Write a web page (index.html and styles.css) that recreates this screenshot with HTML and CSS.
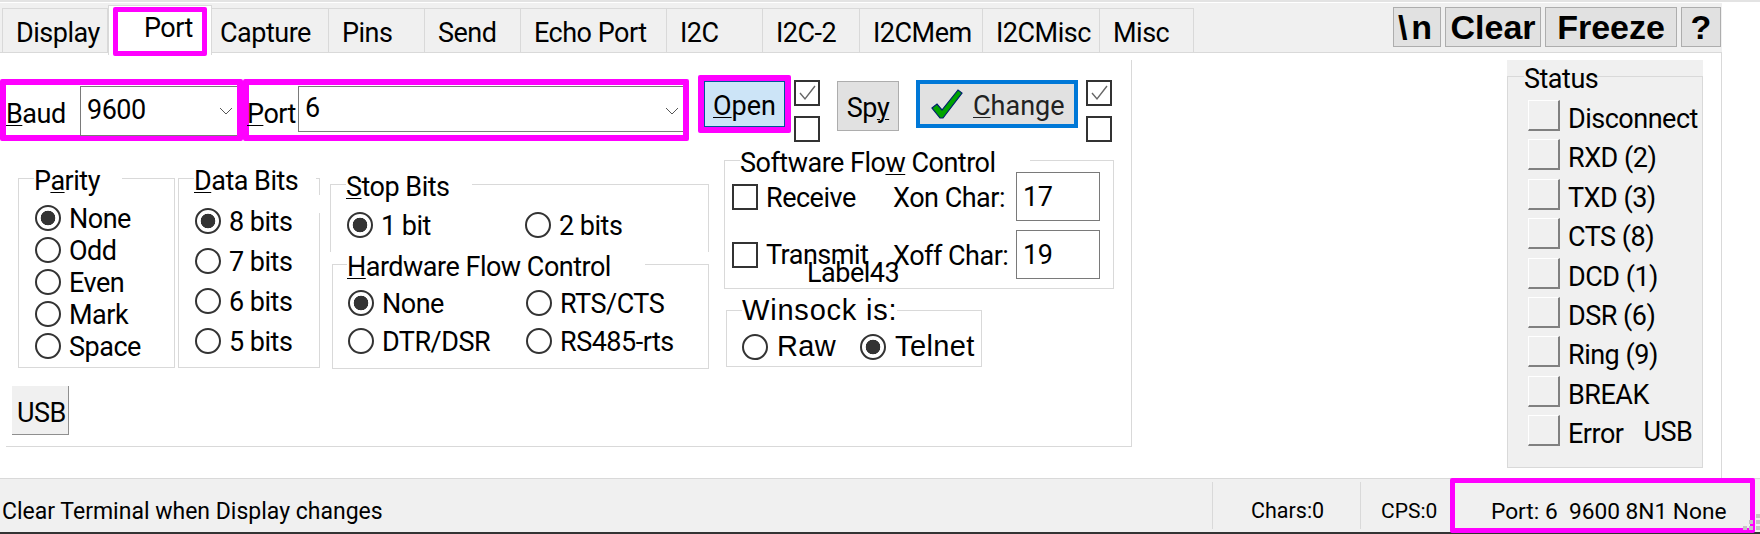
FILE: index.html
```html
<!DOCTYPE html>
<html lang="en">
<head>
    <meta charset="UTF-8">
    <title>Port settings</title>
    <link rel="stylesheet" href="styles.css">
</head>
<body>
    <div class="top-strip"></div>

    <div class="tabbar">
        <div class="tabs">
            <div class="tab">Display</div>
            <div class="tab active"><span class="mark">Port</span></div>
            <div class="tab tab-capture">Capture</div>
            <div class="tab">Pins</div>
            <div class="tab">Send</div>
            <div class="tab">Echo Port</div>
            <div class="tab">I2C</div>
            <div class="tab">I2C-2</div>
            <div class="tab">I2CMem</div>
            <div class="tab">I2CMisc</div>
            <div class="tab">Misc</div>
        </div>
        <div class="tools">
            <button class="tool tool-n">\n</button>
            <button class="tool tool-clear">Clear</button>
            <button class="tool tool-freeze">Freeze</button>
            <button class="tool tool-help">?</button>
        </div>
    </div>

    <div class="main">
        <div class="page">
            <div class="top-row">
                <div class="pick pick-baud">
                    <label class="pick-label"><u>B</u>aud</label>
                    <div class="combo combo-baud">
                        <span>9600</span>
                        <svg class="chevron" width="14" height="8" viewBox="0 0 14 8"><path d="M1 1l6 6 6-6" fill="none" stroke="#555" stroke-width="1"/></svg>
                    </div>
                </div>
                <div class="pick pick-port">
                    <label class="pick-label"><u>P</u>ort</label>
                    <div class="combo combo-port">
                        <span>6</span>
                        <svg class="chevron" width="14" height="8" viewBox="0 0 14 8"><path d="M1 1l6 6 6-6" fill="none" stroke="#555" stroke-width="1"/></svg>
                    </div>
                </div>
                <div class="open-mark"><button class="btn-open"><u>O</u>pen</button></div>
                <div class="checks">
                    <span class="check"><svg width="22" height="22" viewBox="0 0 22 22"><path d="M4 11l5 6L19 4" fill="none" stroke="#666" stroke-width="1.4"/></svg></span>
                    <span class="check"></span>
                </div>
                <button class="btn-spy">Sp<u>y</u></button>
                <button class="btn-change">
                    <svg width="34" height="32" viewBox="0 0 34 32"><path d="M2 20l5-4 5 6L28 2l4 3-19 25h-3z" fill="#00a400" stroke="#00206e" stroke-width="1.2"/></svg>
                    <span><u>C</u>hange</span>
                </button>
                <div class="checks checks-right">
                    <span class="check"><svg width="22" height="22" viewBox="0 0 22 22"><path d="M4 11l5 6L19 4" fill="none" stroke="#666" stroke-width="1.4"/></svg></span>
                    <span class="check"></span>
                </div>
            </div>

            <div class="groups">
                <fieldset class="group group-parity">
                    <legend>P<u>a</u>rity</legend>
                    <label class="opt"><input type="radio" name="parity" checked>None</label>
                    <label class="opt"><input type="radio" name="parity">Odd</label>
                    <label class="opt"><input type="radio" name="parity">Even</label>
                    <label class="opt"><input type="radio" name="parity">Mark</label>
                    <label class="opt"><input type="radio" name="parity">Space</label>
                </fieldset>

                <fieldset class="group group-data">
                    <legend><u>D</u>ata Bits</legend>
                    <label class="opt"><input type="radio" name="data" checked>8 bits</label>
                    <label class="opt"><input type="radio" name="data">7 bits</label>
                    <label class="opt"><input type="radio" name="data">6 bits</label>
                    <label class="opt"><input type="radio" name="data">5 bits</label>
                </fieldset>

                <div class="col-mid">
                    <fieldset class="group group-stop">
                        <legend><u>S</u>top Bits</legend>
                        <div class="opt-grid">
                            <label class="opt"><input type="radio" name="stop" checked>1 bit</label>
                            <label class="opt"><input type="radio" name="stop">2 bits</label>
                        </div>
                    </fieldset>
                    <fieldset class="group group-hw">
                        <legend><u>H</u>ardware Flow Control</legend>
                        <div class="opt-grid">
                            <label class="opt"><input type="radio" name="hw" checked>None</label>
                            <label class="opt"><input type="radio" name="hw">RTS/CTS</label>
                            <label class="opt"><input type="radio" name="hw">DTR/DSR</label>
                            <label class="opt"><input type="radio" name="hw">RS485-rts</label>
                        </div>
                    </fieldset>
                </div>

                <div class="col-right">
                    <fieldset class="group group-soft">
                        <legend>Software Flo<u>w</u> Control</legend>
                        <div class="soft-row">
                            <span class="check"></span>
                            <span class="soft-name">Receive</span>
                            <span class="soft-char">Xon Char:</span>
                            <input class="soft-input" type="text" value="17">
                        </div>
                        <div class="soft-row">
                            <span class="check"></span>
                            <span class="soft-name soft-name-up">Transmit</span>
                            <span class="soft-char">Xoff Char:</span>
                            <input class="soft-input" type="text" value="19">
                        </div>
                        <span class="label43">Label43</span>
                    </fieldset>
                    <fieldset class="group group-winsock">
                        <legend>Winsock is:</legend>
                        <div class="opt-grid">
                            <label class="opt"><input type="radio" name="winsock">Raw</label>
                            <label class="opt"><input type="radio" name="winsock" checked>Telnet</label>
                        </div>
                    </fieldset>
                </div>
            </div>

            <button class="btn-usb">USB</button>
        </div>

        <div class="status-box">
            <fieldset class="status">
                <legend>Status</legend>
                <div class="led-row"><span class="led"></span>Disconnect</div>
                <div class="led-row"><span class="led"></span>RXD (2)</div>
                <div class="led-row"><span class="led"></span>TXD (3)</div>
                <div class="led-row"><span class="led"></span>CTS (8)</div>
                <div class="led-row"><span class="led"></span>DCD (1)</div>
                <div class="led-row"><span class="led"></span>DSR (6)</div>
                <div class="led-row"><span class="led"></span>Ring (9)</div>
                <div class="led-row"><span class="led"></span>BREAK</div>
                <div class="led-row"><span class="led"></span>Error<span class="led-usb">USB</span></div>
            </fieldset>
        </div>
    </div>

    <div class="statusbar">
        <div class="sb-msg">Clear Terminal when Display changes</div>
        <div class="sb-chars">Chars:0</div>
        <div class="sb-cps">CPS:0</div>
        <div class="sb-port">Port: 6  9600 8N1 None</div>
        <svg class="grip" width="18" height="20" viewBox="0 0 18 20" fill="#c4c4c4">
            <rect x="1" y="14" width="4" height="4"/>
            <rect x="7" y="14" width="4" height="4"/>
            <rect x="7" y="8" width="4" height="4"/>
            <rect x="14" y="14" width="4" height="4"/>
            <rect x="14" y="8" width="4" height="4"/>
            <rect x="14" y="2" width="4" height="4"/>
        </svg>
    </div>
</body>
</html>
```

FILE: styles.css
```css
* {
    box-sizing: border-box;
}
body {
    font-family: Roboto, sans-serif;
    font-size: 27px;
    letter-spacing: -0.5px;
    color: #000;
    background-color: #fff;
    margin: 0;
    width: 1760px;
    height: 534px;
    overflow: hidden;
}
u {
    text-underline-offset: 2px;
    text-decoration-thickness: 1px;
}
button {
    font-family: inherit;
    font-size: inherit;
    letter-spacing: inherit;
    color: inherit;
    padding: 0;
    border-radius: 0;
}

.top-strip {
    height: 3px;
    border-top: 2px solid #e3e3e3;
}

/* tab strip */
.tabbar {
    display: flex;
    justify-content: space-between;
    width: 1722px;
    height: 50px;
    background-color: #f0f0f0;
    border-bottom: 1px solid #d9d9d9;
}
.tabs {
    display: grid;
    grid-template-columns: 106px 104px 117px 96px 96px 146px 96px 97px 123px 117px 94px;
    margin-left: 2px;
    height: 49px;
    padding-top: 5px;
}
.tab {
    height: 44px;
    padding-left: 13px;
    line-height: 48px;
    border: 1px solid #d9d9d9;
    border-left: 0;
    border-bottom: 0;
    background-color: #f0f0f0;
}
.tab:first-child {
    border-left: 1px solid #d9d9d9;
}
.tab-capture {
    padding-left: 8px;
}
.tab.active {
    height: 50px;
    margin-top: -3px;
    padding: 1px 4px 0;
    background-color: #fff;
    border: 1px solid #d9d9d9;
    border-bottom: 0;
    position: relative;
}
.mark {
    display: block;
    height: 49px;
    padding-left: 26px;
    line-height: 32px;
    border: 5px solid #f0f;
    border-radius: 2px;
}
.tools {
    display: flex;
    gap: 4px;
    padding-top: 4px;
    padding-right: 1px;
}
.tool {
    height: 40px;
    font-family: "Liberation Sans", sans-serif;
    font-size: 34px;
    font-weight: bold;
    letter-spacing: 0;
    line-height: 36px;
    background-color: #e1e1e1;
    border: 1px solid #adadad;
}
.tool-n {
    width: 48px;
    letter-spacing: 4px;
}
.tool-clear { width: 96px; }
.tool-freeze { width: 132px; }
.tool-help { width: 40px; }

/* main area */
.main {
    display: flex;
    justify-content: space-between;
    width: 1722px;
    height: 425px;
    padding-right: 18px;
    border-right: 1px solid #d9d9d9;
}
.page {
    width: 1126px;
    height: 387px;
    margin: 7px 0 0 6px;
    padding-top: 15px;
    border-right: 1px solid #d9d9d9;
    border-bottom: 1px solid #d9d9d9;
}

.top-row {
    display: flex;
    align-items: flex-start;
    margin-left: -6px;
}
.pick {
    display: flex;
    height: 62px;
    margin-top: 4px;
    border: 6px solid #f0f;
    border-radius: 2px;
}
.pick-baud {
    width: 243px;
}
.pick-port {
    width: 446px;
}
.pick-label {
    padding-top: 9px;
    line-height: 40px;
}
.pick-baud .pick-label {
    width: 74px;
}
.pick-port .pick-label {
    width: 49px;
    margin: 0 2px 0 -2px;
}
.combo {
    position: relative;
    flex: 1;
    border-top: 1px solid #7a7a7a;
    border-left: 1px solid #7a7a7a;
    border-bottom: 1px solid #7a7a7a;
    background-color: #fff;
    padding-left: 6px;
}
.combo-baud {
    height: 50px;
    margin-top: 1px;
    line-height: 46px;
}
.combo-port {
    height: 46px;
    margin-top: 1px;
    line-height: 42px;
}
.chevron {
    position: absolute;
    right: 4px;
    top: 20px;
}
.open-mark {
    margin-left: 9px;
    padding: 6px;
    width: 93px;
    height: 58px;
    background-color: #f0f;
    border-radius: 2px;
}
.btn-open {
    display: block;
    width: 81px;
    height: 46px;
    padding-top: 3px;
    letter-spacing: 0;
    background-color: #cce4f7;
    border: 1px solid #005499;
}
.checks {
    display: flex;
    flex-direction: column;
    gap: 10px;
    margin: 5px 0 0 3px;
}
.checks-right {
    margin-left: 8px;
}
.check {
    display: block;
    flex: none;
    width: 26px;
    height: 26px;
    border: 2px solid #333;
    background-color: #fff;
}
.check svg {
    display: block;
}
.btn-spy {
    width: 62px;
    height: 50px;
    margin: 6px 0 0 17px;
    padding-top: 3px;
    background-color: #e1e1e1;
    border: 1px solid #adadad;
}
.btn-change {
    display: flex;
    align-items: center;
    gap: 9px;
    width: 162px;
    height: 48px;
    margin: 5px 0 0 17px;
    padding: 0 0 0 10px;
    letter-spacing: 0;
    background-color: #e1e1e1;
    border: 4px solid #0078d7;
    color: #222;
}
.btn-change span {
    padding-top: 3px;
}

/* option groups */
.groups {
    display: flex;
    align-items: flex-start;
    margin-top: 3px;
    height: 226px;
}
.group {
    margin: 0;
    padding: 0 0 0 16px;
    border: 1px solid #d9d9d9;
    min-width: 0;
}
.group legend {
    margin-left: -1px;
    padding: 6px 22px 0 0;
    line-height: 30px;
    white-space: nowrap;
}
.opt {
    display: flex;
    align-items: center;
    padding-top: 2px;
    white-space: nowrap;
}
.opt input {
    appearance: none;
    flex: none;
    width: 26px;
    height: 26px;
    margin: -2px 8px 0 0;
    border: 2px solid #333;
    border-radius: 50%;
    background-color: #fff;
}
.opt input:checked {
    background: radial-gradient(circle, #333 0 7px, #fff 7.6px);
}
.group-parity {
    width: 157px;
    height: 208px;
    margin: 15px 0 0 12px;
    padding-top: 6px;
}
.group-parity .opt {
    height: 32px;
}
.group-data {
    position: relative;
    width: 142px;
    height: 208px;
    margin: 15px 0 0 3px;
    padding-top: 5px;
}
.group-data::after {
    content: "";
    position: absolute;
    top: -1px;
    right: -1px;
    width: 1px;
    height: 18px;
    background-color: #fff;
}
.group-data legend {
    padding-right: 18px;
}
.group-data .opt {
    height: 40px;
}
.col-mid {
    margin-left: 10px;
    margin-top: 21px;
}
.opt-grid {
    display: grid;
    grid-template-columns: 178px auto;
}
.group-stop {
    width: 379px;
    height: 86px;
    padding-top: 10px;
    border-bottom: 0;
}
.group-stop .opt {
    height: 26px;
}
.group-hw {
    width: 377px;
    height: 123px;
    margin: -6px 0 0 2px;
    padding: 8px 0 0 15px;
    background-color: #fff;
    position: relative;
}
.group-hw legend {
    padding-right: 34px;
}
.group-hw .opt {
    height: 26px;
    margin-bottom: 12px;
}
.col-right {
    margin-left: 15px;
}
.group-soft {
    position: relative;
    width: 390px;
    height: 144px;
    padding-left: 7px;
}
.group-soft legend {
    margin-left: 8px;
    padding-right: 34px;
    line-height: 24px;
}
.soft-row {
    display: flex;
    align-items: center;
    height: 49px;
    margin-bottom: 9px;
}
.soft-row:first-of-type {
    margin-top: -3px;
}
.soft-name {
    width: 127px;
    margin-left: 8px;
    padding-top: 3px;
}
.soft-name-up {
    padding-top: 0;
}
.soft-char {
    width: 123px;
    padding-top: 3px;
}
.soft-input {
    width: 84px;
    height: 49px;
    padding: 0 0 0 6px;
    font-family: inherit;
    font-size: inherit;
    letter-spacing: inherit;
    border: 1px solid #7a7a7a;
    border-radius: 0;
    background-color: #fff;
}
.label43 {
    position: absolute;
    left: 82px;
    top: 83px;
    line-height: 30px;
}
.group-winsock {
    width: 256px;
    height: 72px;
    margin: 6px 0 0 2px;
    padding: 5px 0 0 15px;
    font-family: "Liberation Sans", sans-serif;
    font-size: 29px;
    letter-spacing: 0.4px;
}
.group-winsock legend {
    margin-left: 0;
    padding: 0;
    letter-spacing: 0.8px;
}
.group-winsock .opt-grid {
    grid-template-columns: 118px auto;
}
.group-winsock .opt {
    padding-top: 0;
}
.group-winsock .opt input {
    margin: 0 9px 0 0;
}
.btn-usb {
    display: block;
    width: 57px;
    height: 49px;
    margin: 15px 0 0 6px;
    padding: 5px 0 0 3px;
    background-color: #f0f0f0;
    border: 0;
    border-right: 1px solid #8f8f8f;
    border-bottom: 1px solid #8f8f8f;
}

/* status panel */
.status-box {
    width: 196px;
    height: 408px;
    margin-top: 7px;
    background-color: #f0f0f0;
}
.status {
    height: 408px;
    margin: 0;
    padding: 8px 0 0 20px;
    min-width: 0;
    border: 1px solid #d9d9d9;
}
.status legend {
    margin-left: -4px;
    padding: 6px 0 0;
    line-height: 26px;
}
.led-row {
    display: flex;
    align-items: flex-start;
    height: 39.4px;
    line-height: 38px;
    white-space: nowrap;
}
.led {
    width: 32px;
    height: 31px;
    margin-right: 8px;
    border-top: 1px solid #fff;
    border-left: 1px solid #fff;
    border-right: 2px solid #808080;
    border-bottom: 2px solid #808080;
}
.led-usb {
    margin: -2px 0 0 20px;
}

/* status bar */
.statusbar {
    position: relative;
    display: flex;
    align-items: center;
    height: 56px;
    font-size: 23px;
    letter-spacing: 0;
    background-color: #f0f0f0;
    border-top: 1px solid #d9d9d9;
    border-bottom: 2px solid #333;
}
.sb-msg {
    width: 1212px;
    padding: 12px 0 0 2px;
}
.sb-chars {
    width: 148px;
    height: 47px;
    line-height: 58px;
    padding-left: 38px;
    font-size: 21.5px;
    border-left: 1px solid #d9d9d9;
}
.sb-cps {
    width: 90px;
    height: 47px;
    line-height: 58px;
    padding-left: 20px;
    font-size: 21px;
    border-left: 1px solid #d9d9d9;
}
.sb-port {
    width: 305px;
    height: 55px;
    margin: -1px 0;
    padding-left: 36px;
    font-size: 22.7px;
    line-height: 58px;
    white-space: pre;
    border: 5px solid #f0f;
    border-radius: 2px;
}
.grip {
    position: absolute;
    right: 0;
    bottom: 0;
}
```
